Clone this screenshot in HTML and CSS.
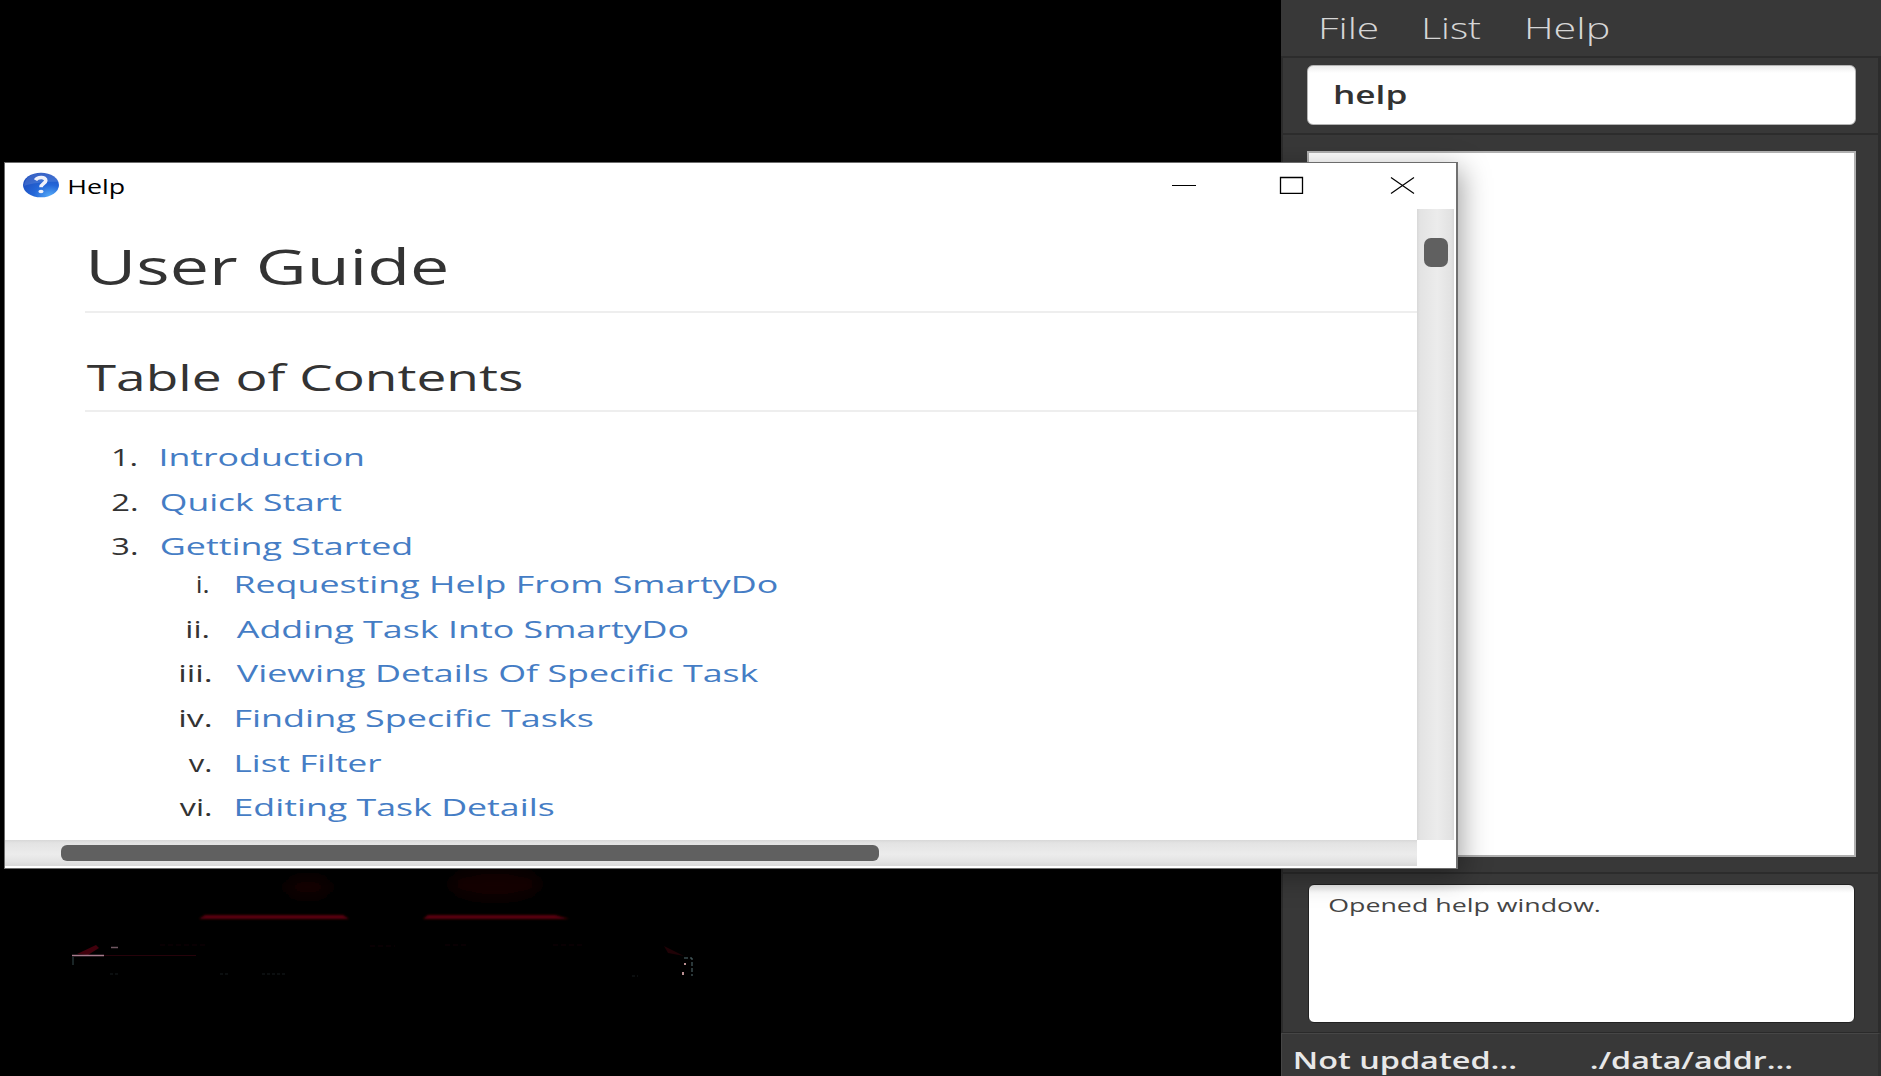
FILE: index.html
```html
<!DOCTYPE html>
<html lang="en">
<head>
<meta charset="utf-8">
<title>SmartyDo</title>
<link rel="stylesheet" href="styles.css">
</head>
<body>
<div class="desktop">
  <svg class="wallpaper" width="760" height="140" viewBox="0 868 760 140">
    <defs>
      <filter id="soft" x="-20%" y="-50%" width="140%" height="200%"><feGaussianBlur stdDeviation="7"/></filter>
      <filter id="edge" x="-5%" y="-200%" width="110%" height="500%"><feGaussianBlur stdDeviation="1.2 0.8"/></filter>
    </defs>
    <g filter="url(#soft)" fill="#150002"><ellipse cx="308" cy="887" rx="24" ry="10"/><ellipse cx="495" cy="884" rx="46" ry="15"/></g>
    <g filter="url(#edge)" fill="#5a0310"><path d="M205 915H343L349 919H199Z"/><path d="M428 915H555L569 919H423Z"/></g>
    <path d="M77 954L96 945 99 948 88 955Z" fill="#41000c"/>
    <path d="M72 955.500H104" stroke="#a77a8c" stroke-width="1.500"/>
    <path d="M104 955.500H196" stroke="#26020a"/>
    <path d="M73 957V965" stroke="#354b4c"/>
    <path d="M111 947.500H118" stroke="#6f5660" stroke-width="1.500"/>
    <path d="M160 945H205M370 946H395M445 945H467M553 945H585" stroke="#120106" stroke-dasharray="5 3"/>
    <path d="M110 974H118M220 974H228M262 974H285M632 976H638" stroke="#171c1f" stroke-dasharray="3 2"/>
    <path d="M664 946L684 956 668 953Z" fill="#1f0206"/>
    <path d="M684 958H692V976" fill="none" stroke="#567175" stroke-dasharray="4 2"/>
    <path d="M685 963V965M683 972V975" stroke="#b98f91" stroke-width="2"/>
  </svg>

  <main class="app">
    <nav class="menu"><span data-w="57">File</span><span data-w="57">List</span><span data-w="82">Help</span></nav>
    <section class="command"><div class="field"><span data-w="71.5">help</span></div></section>
    <section class="tasks"><div class="list"></div></section>
    <section class="result"><div class="message"><span data-w="271">Opened help window.</span></div></section>
    <footer class="status"><span data-w="221">Not updated...</span><span data-w="201">./data/addr...</span></footer>
  </main>

  <article class="window">
    <header class="titlebar">
      <svg class="badge" width="37" height="26" viewBox="0 0 37 26">
        <defs>
          <radialGradient id="ball" cx=".75" cy=".95" r=".9"><stop offset="0" stop-color="#55aaf8"/><stop offset=".5" stop-color="#2467d8"/><stop offset="1" stop-color="#1f50c0"/></radialGradient>
        </defs>
        <ellipse cx="18" cy="13" rx="18" ry="12.300" fill="url(#ball)"/>
        <path d="M1 14C2-3 33-3 36 10 27 9 9 11 1 14Z" fill="#fff" opacity=".12"/>
        <path d="M12.500 8.200C14.500 4.500 23 4.700 22.800 8.600 22.700 11.500 18 11.500 18 15.300" fill="none" stroke="#f0f2fb" stroke-width="3.600"/>
        <ellipse cx="18" cy="19.500" rx="2.600" ry="1.700" fill="#f0f2fb"/>
      </svg>
      <span class="caption" data-w="55.5">Help</span>
      <svg class="controls" width="244" height="18" viewBox="0 0 244 18" fill="none" stroke="#000">
        <path d="M0 9.500H24"/>
        <path d="M108.500 1.500H130.500V17.500H108.500Z" stroke-width="1.300"/>
        <path d="M219 1.500L242 17.500M242 1.500L219 17.500" stroke-width="1.200"/>
      </svg>
    </header>
    <div class="view">
      <div class="page">
        <h1><span data-w="357">User Guide</span></h1>
        <h2><span data-w="436">Table of Contents</span></h2>
        <ol class="toc">
          <li><b><span data-w="23.5">1.</span></b><a><span data-w="202">Introduction</span></a></li>
          <li><b><span data-w="25">2.</span></b><a><span data-w="181">Quick Start</span></a></li>
          <li><b><span data-w="25">3.</span></b><a><span data-w="250">Getting Started</span></a></li>
        </ol>
        <ol class="toc sub">
          <li><b class="short"><span data-w="11.5">i.</span></b><a><span data-w="541">Requesting Help From SmartyDo</span></a></li>
          <li><b class="short"><span data-w="21.5">ii.</span></b><a><span data-w="452">Adding Task Into SmartyDo</span></a></li>
          <li><b><span data-w="31">iii.</span></b><a><span data-w="523">Viewing Details Of Specific Task</span></a></li>
          <li><b><span data-w="31">iv.</span></b><a><span data-w="357">Finding Specific Tasks</span></a></li>
          <li><b><span data-w="23">v.</span></b><a><span data-w="146">List Filter</span></a></li>
          <li><b><span data-w="32">vi.</span></b><a><span data-w="318">Editing Task Details</span></a></li>
        </ol>
      </div>
      <div class="vbar"><i></i></div>
    </div>
    <div class="hbar"><i></i></div>
  </article>
</div>
<script src="fit.js"></script>
</body>
</html>
```
FILE: styles.css
```css
* { box-sizing: border-box; }
body { margin: 0; background: #000; font-family: "Open Sans", "Noto Sans", sans-serif; }
.desktop { position: relative; width: 1881px; height: 1076px; overflow: hidden; background: #000; }
.wallpaper { position: absolute; left: 0; top: 868px; }

/* Labels are drawn wide: the script stretches each one to its data-w */
[data-w] { display: inline-block; white-space: nowrap; }
[data-w] > span { display: inline-block; transform-origin: 0 50%; }

.app { position: absolute; left: 1281px; top: 0; width: 600px; height: 1076px; display: flex; flex-direction: column; background: #383838; }
.menu, .command, .tasks, .result { flex-shrink: 0; }
.menu { height: 56px; padding-left: 40px; display: flex; gap: 46px; font-size: 28.5px; font-weight: 300; line-height: 57px; color: #d6d6d6; }
.command, .tasks, .result { border: 2px solid #2c2c2c; border-right-width: 3px; border-bottom: 0; }
.command { height: 77px; padding: 7px 22px 0 24px; }
.field { height: 60px; padding-left: 27px; border: 1px solid #b4b4b4; border-radius: 6px; background: linear-gradient(#ececec, #fff 7px); font-size: 24.5px; font-weight: 600; line-height: 58px; color: #323232; }
.tasks { height: 739px; padding: 16px 22px 0 24px; }
.list { height: 706px; background: #fff; border: 2px solid #b0b0b0; }
.result { height: 161px; padding: 10px 23px 0 25px; }
.message { height: 139px; padding: 0 0 0 20px; border: 1px solid #222; border-radius: 6px; background: linear-gradient(#e8e8e8, #fff 8px); font-size: 18.7px; line-height: 40px; color: #454545; }
.status { flex: 1; min-height: 0; padding-left: 13px; display: flex; gap: 75px; border: 1px solid #464646; border-bottom: 0; border-right: 3px solid #303030; box-shadow: 0 -1px #2a2a2a; font-size: 23px; font-weight: 600; line-height: 52px; color: #e8e8e8; }

.window { position: absolute; left: 4px; top: 162px; width: 1454px; height: 707px; display: flex; flex-direction: column; background: #fff; border: 1px solid #6c6c6c; border-right: 2px solid #707070; box-shadow: 4px 7px 26px rgba(0,0,0,.36); }
.titlebar { height: 46px; display: flex; }
.badge { margin: 9px 9px 0 18px; }
.caption { font-size: 20px; line-height: 47px; color: #000; }
.controls { margin: 13px 0 0 1047px; }
.view { height: 631px; display: flex; }
.page { width: 1412px; padding-left: 80px; color: #333; overflow: hidden; }
h1, h2 { margin: 0; font-weight: 400; border-bottom: 2px solid #eee; }
h1 { height: 104px; padding: 0 0 0 5px; font-size: 49.500px; line-height: 115px; }
h2 { height: 99px; padding: 30px 0 0 1px; font-size: 37px; line-height: 68px; }
.toc { list-style: none; margin: 23px 0 0; padding: 0; font-size: 24.500px; }
.toc li { display: flex; height: 44.600px; line-height: 44.600px; }
.toc b { width: 51.500px; margin-right: 24px; font-weight: 400; text-align: right; }
.toc a { color: #457dc5; }
.toc.sub { margin-top: -6.670px; }
.sub b { width: 126px; margin-right: 25px; }
.sub b.short { width: 123.500px; margin-right: 27.500px; }
.vbar { width: 37px; padding: 29px 0 0 7px; background: linear-gradient(90deg, #d8d8d8, #e3e3e3 3px, #ececec 55%, #e2e2e2 34px, #d8d8d8); }
.vbar i { display: block; width: 24px; height: 29px; border-radius: 7px; background: #606060; }
.hbar { width: 1412px; height: 26px; padding: 5px 0 0 56px; background: linear-gradient(#d8d8d8, #e3e3e3 3px, #ececec 55%, #e2e2e2 22px, #d8d8d8); }
.hbar i { display: block; width: 818px; height: 16px; border-radius: 6px; background: #606060; }
```
FILE: fit.js
```javascript
// Stretch every label horizontally so its ink spans data-w pixels,
// less a small inset on each side for the antialiased edges.
const ctx = document.createElement("canvas").getContext("2d");
const SCALE = 10; // measured at ten times the size for sub-pixel precision
const INSET = 0.8;
document.querySelectorAll("[data-w]").forEach((label) => {
  const width = parseFloat(label.dataset.w);
  const style = getComputedStyle(label);
  ctx.font = style.fontWeight + " " + parseFloat(style.fontSize) * SCALE + "px " + style.fontFamily;
  const box = ctx.measureText(label.textContent);
  const left = box.actualBoundingBoxLeft / SCALE;
  const k = (width - 2 * INSET) / (left + box.actualBoundingBoxRight / SCALE);
  const inner = document.createElement("span");
  inner.textContent = label.textContent;
  inner.style.transform = "translateX(" + (left * k + INSET) + "px) scaleX(" + k + ")";
  label.replaceChildren(inner);
  label.style.width = width + "px";
  label.style.textAlign = "left";
});
```
